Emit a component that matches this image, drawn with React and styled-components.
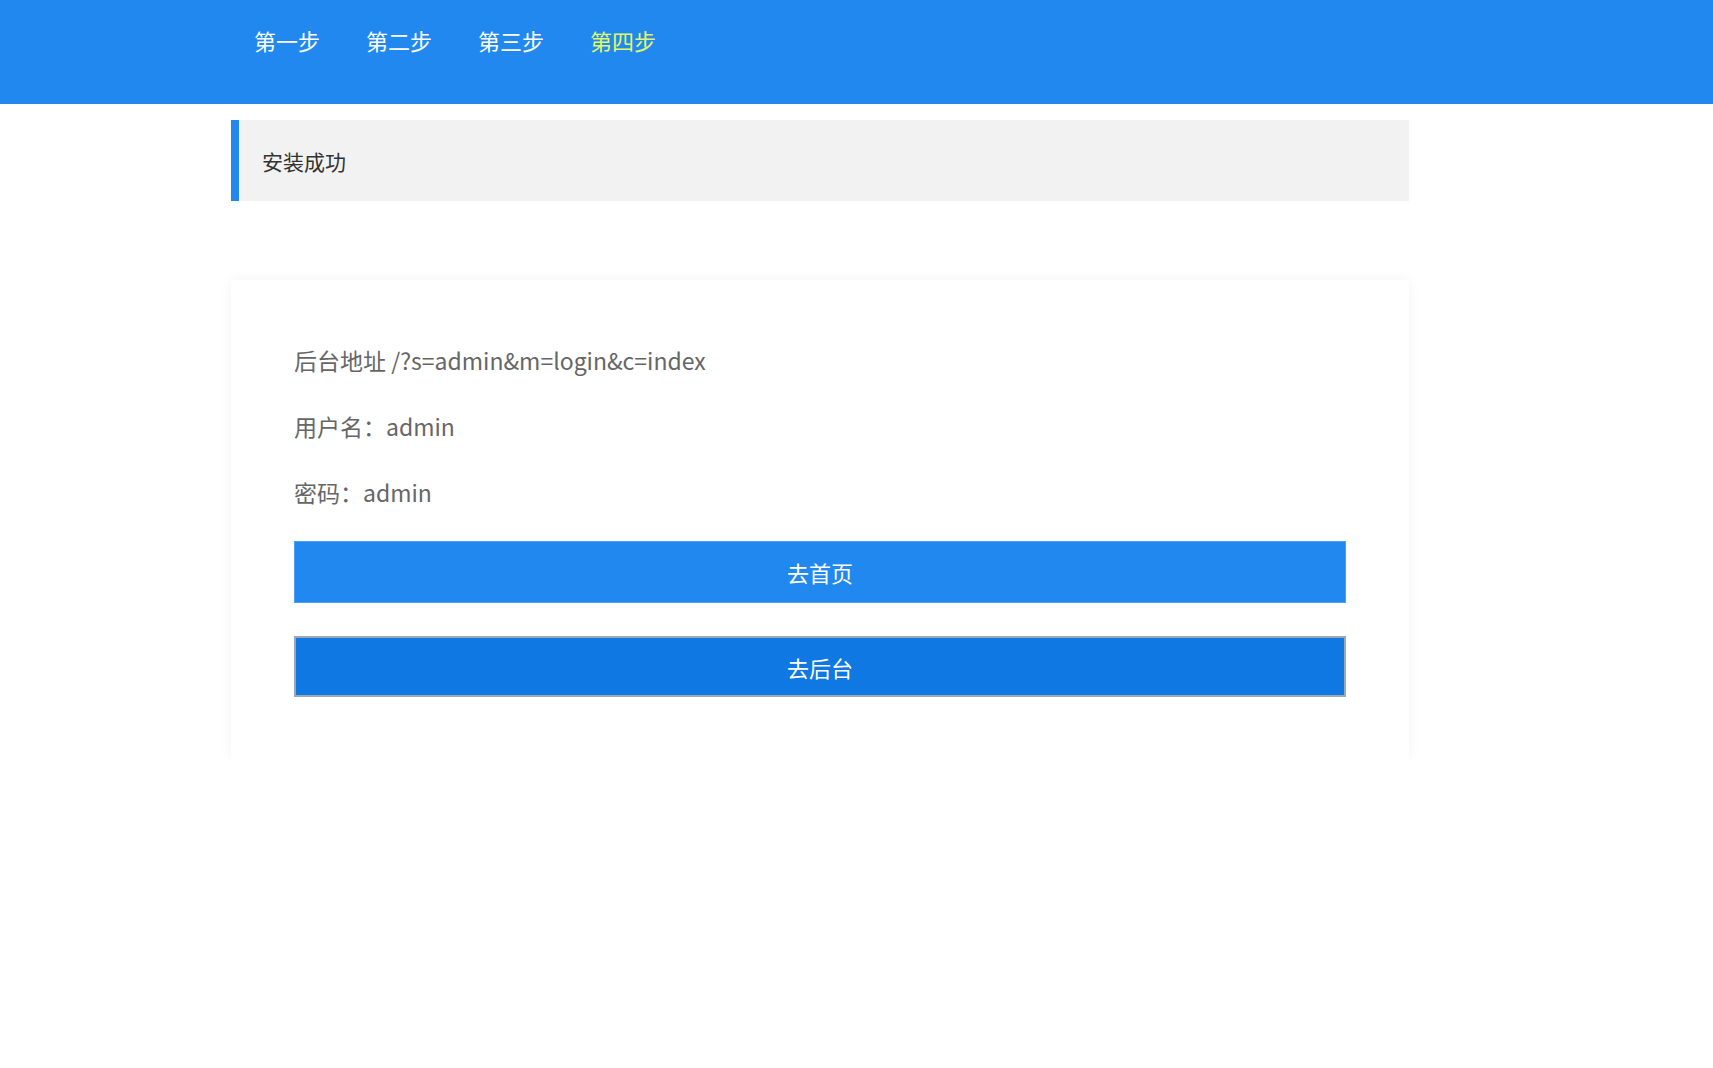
import React from 'react';
import styled, { createGlobalStyle } from 'styled-components';

const GlobalStyle = createGlobalStyle`
    body {
        margin: 0;
        background: #fff;
        font-family: "Noto Sans CJK SC", "Noto Sans", sans-serif;
    }
`;

const Header = styled.header`
    height: 104px;
    background-color: #2088ef;
`;

const Inner = styled.div`
    width: 1178px;
    margin-left: 231px;
`;

const Nav = styled.nav`
    display: flex;
    height: 79px;
    align-items: center;
`;

const NavItem = styled.a`
    padding: 0 23px;
    font-size: 22px;
    line-height: 30px;
    color: ${props => (props.$active ? '#e2f765' : '#fff')};
    text-decoration: none;
    cursor: pointer;
`;

const Quote = styled.div`
    margin-top: 16px;
    height: 81px;
    display: flex;
    align-items: center;
    box-sizing: border-box;
    padding-left: 23px;
    background: #f2f2f2;
    border-left: 8px solid #2088ef;
    font-size: 21px;
    color: #333;
`;

const Card = styled.div`
    margin-top: 79px;
    padding: 63px;
    background: #fff;
    box-shadow: 0 0 12px rgba(0, 0, 0, 0.05);
`;

const Line = styled.p`
    margin: 0 0 32px;
    font-size: 23px;
    line-height: 34px;
    color: #666;
`;

const Button = styled.button`
    display: block;
    width: 100%;
    box-sizing: border-box;
    margin-top: ${props => props.$gap}px;
    height: ${props => (props.$dark ? 61 : 62)}px;
    font-family: inherit;
    font-size: 22px;
    color: #fff;
    cursor: pointer;
    background-color: ${props => (props.$dark ? '#0f78e3' : '#2088ef')};
    border: ${props => (props.$dark ? '2px solid #9aa8b8' : '1px solid #4aa0f5')};
`;

const steps = ['第一步', '第二步', '第三步', '第四步'];

export default function App() {
    return (
        <>
            <GlobalStyle />
            <Header>
                <Inner>
                    <Nav>
                        {steps.map((s, i) => (
                            <NavItem key={s} $active={i === 3}>{s}</NavItem>
                        ))}
                    </Nav>
                </Inner>
            </Header>
            <Inner>
                <Quote>安装成功</Quote>
                <Card>
                    <Line>后台地址 /?s=admin&amp;m=login&amp;c=index</Line>
                    <Line>用户名：admin</Line>
                    <Line>密码：admin</Line>
                    <Button $gap={0}>去首页</Button>
                    <Button $gap={33} $dark>去后台</Button>
                </Card>
            </Inner>
        </>
    );
}
